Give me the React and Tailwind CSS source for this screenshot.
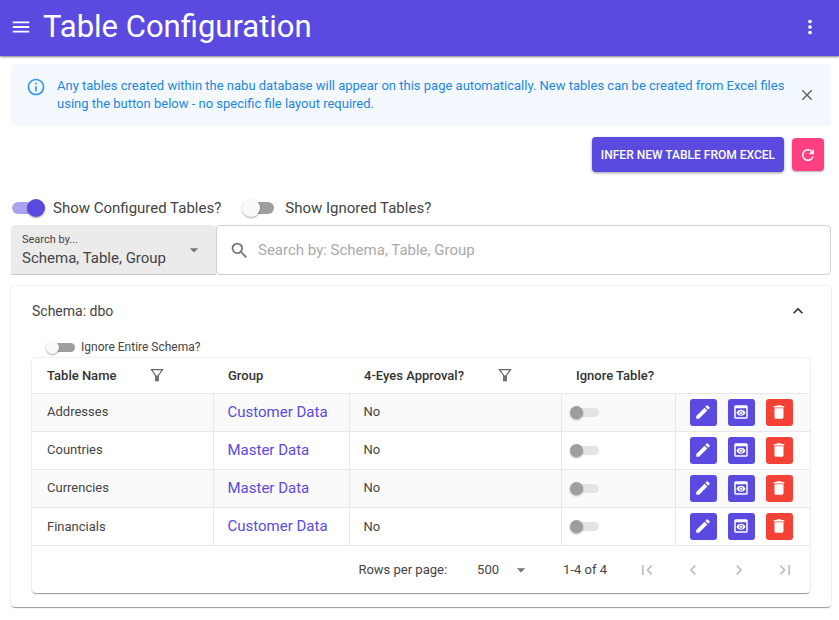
import { useState } from 'react';
import clsx from 'clsx';
import {
  MdMenu, MdMoreVert, MdInfoOutline, MdClose, MdRefresh, MdSearch, MdArrowDropDown, MdExpandLess,
  MdEdit, MdPreview, MdDelete, MdFirstPage, MdLastPage, MdChevronLeft, MdChevronRight,
} from 'react-icons/md';

const TABLES = [
  { name: 'Addresses', group: 'Customer Data', approval: 'No' },
  { name: 'Countries', group: 'Master Data', approval: 'No' },
  { name: 'Currencies', group: 'Master Data', approval: 'No' },
  { name: 'Financials', group: 'Customer Data', approval: 'No' },
];

const PAPER = 'rounded bg-white shadow-[0_2px_1px_-1px_rgba(0,0,0,0.25),0_1px_1px_rgba(0,0,0,0.14),0_0_2px_rgba(0,0,0,0.2)]';

function Switch({ small, ...props }) {
  return (
    <input
      type="checkbox"
      className={clsx(
        'relative shrink-0 appearance-none rounded-full bg-[#9e9ea1] cursor-pointer',
        'before:absolute before:rounded-full before:bg-[#fafafa] before:shadow-[0_1px_2px_rgba(0,0,0,0.35)]',
        'checked:bg-[#aca4f0] checked:before:bg-[#5a4ae0]',
        'disabled:bg-[#e3e4e3] disabled:before:bg-[#9e9e9e] disabled:cursor-default',
        small
          ? 'h-[9px] w-[27px] before:-left-0.5 before:-top-0.5 before:size-[13px] checked:before:left-4'
          : 'h-3 w-[30px] before:-left-0.5 before:-top-[3px] before:size-[18px] checked:before:left-[15px]'
      )}
      {...props}
    />
  );
}

function FilterIcon() {
  return (
    <svg viewBox="0 0 14 14" className="size-[14px] text-[#666]" fill="none" stroke="currentColor" strokeWidth="1.2">
      <path d="M1.4 1.65h11.2L8.3 7.4v5.2H5.7V7.4z" />
      <path d="M7 7.5v5" strokeWidth="1.8" />
    </svg>
  );
}

function IconButton({ label, className, children, ...props }) {
  return (
    <button aria-label={label} className={clsx('flex items-center justify-center shrink-0', className)} {...props}>
      {children}
    </button>
  );
}

function HeadCell({ children, filter, className }) {
  return (
    <th className={clsx('px-[15px] text-left font-medium', className)}>
      <div className="flex items-center justify-between">
        {children}
        {filter && (
          <IconButton label={`Filter ${children}`} className="mr-[34px]">
            <FilterIcon />
          </IconButton>
        )}
      </div>
    </th>
  );
}

function TableRow({ row }) {
  return (
    <tr className="h-[38px] border-t border-[#e8e8e8] odd:bg-[#fafafa]">
      <td className="px-[15px]">{row.name}</td>
      <td className="border-l border-[#e8e8e8] px-[14px]">
        <a href="#group" className="text-[15px] text-[#5a4ae0]">{row.group}</a>
      </td>
      <td className="border-l border-[#e8e8e8] px-[14px]">{row.approval}</td>
      <td className="border-l border-[#e8e8e8] px-[10px]">
        <div className="flex">
          <Switch small disabled aria-label={`Ignore ${row.name}`} />
        </div>
      </td>
      <td className="border-l border-[#e8e8e8] pl-[14px]">
        <div className="flex gap-[11px]">
          <IconButton label={`Edit ${row.name}`} className="size-[27px] rounded-[3px] bg-[#5a4ae0] text-white">
            <MdEdit size={18} />
          </IconButton>
          <IconButton label={`Preview ${row.name}`} className="size-[27px] rounded-[3px] bg-[#5a4ae0] text-white">
            <MdPreview size={18} />
          </IconButton>
          <IconButton label={`Delete ${row.name}`} className="size-[27px] rounded-[3px] bg-[#f44336] text-white">
            <MdDelete size={18} />
          </IconButton>
        </div>
      </td>
    </tr>
  );
}

function Pagination() {
  return (
    <div className="flex h-12 items-center justify-end border-t border-[#e8e8e8] pr-[15px] text-[13px]">
      <label htmlFor="rows">Rows per page:</label>
      <div className="relative ml-[30px] mr-8 flex items-center">
        <select id="rows" className="w-[54px] appearance-none bg-transparent outline-none">
          <option>500</option>
        </select>
        <MdArrowDropDown size={20} className="pointer-events-none absolute right-0 text-[#757575]" />
      </div>
      <span>1-4 of 4</span>
      <div className="ml-[30px] flex gap-[26px] text-[#bdbdbd]">
        <IconButton label="First page" disabled><MdFirstPage size={20} /></IconButton>
        <IconButton label="Previous page" disabled><MdChevronLeft size={20} /></IconButton>
        <IconButton label="Next page" disabled><MdChevronRight size={20} /></IconButton>
        <IconButton label="Last page" disabled><MdLastPage size={20} /></IconButton>
      </div>
    </div>
  );
}

function SchemaPanel() {
  const [open, setOpen] = useState(true);

  return (
    <section className={clsx('mt-[11px] px-[21px] pb-[14px]', PAPER)}>
      <button onClick={() => setOpen(o => !o)} className="flex h-[50px] w-full items-center justify-between">
        <span className="text-sm">Schema: dbo</span>
        <MdExpandLess size={20} className={clsx('mr-0.5 text-[#333]', !open && 'rotate-180')} />
      </button>

      {open && (
        <>
          <label className="ml-4 flex h-[22px] items-center gap-[6px] text-xs">
            <Switch small />
            Ignore Entire Schema?
          </label>
          <div className={PAPER}>
            <table className="w-full table-fixed border-collapse text-[13px]">
              <thead>
                <tr className="h-[35px] text-[#333]">
                  <HeadCell filter className="w-[181px]">Table Name</HeadCell>
                  <HeadCell className="w-[136px]">Group</HeadCell>
                  <HeadCell filter className="w-[212px]">4-Eyes Approval?</HeadCell>
                  <HeadCell className="w-[114px]">Ignore Table?</HeadCell>
                  <th aria-label="Actions" />
                </tr>
              </thead>
              <tbody>
                {TABLES.map(row => <TableRow key={row.name} row={row} />)}
              </tbody>
            </table>
            <Pagination />
          </div>
        </>
      )}
    </section>
  );
}

export default function App() {
  const [showInfo, setShowInfo] = useState(true);

  return (
    <div className="min-h-screen bg-white font-[Roboto,sans-serif] text-[#444]">
      {/* App bar */}
      <header className="flex h-14 items-center bg-[#5a4ae0] pb-0.5 pl-[10px] pr-[18px] text-white shadow-[0_1px_2px_rgba(0,0,0,0.5)]">
        <IconButton label="Menu"><MdMenu size={22} /></IconButton>
        <h1 className="ml-[11px] flex-1 text-[31px] leading-[54px]">Table Configuration</h1>
        <IconButton label="More"><MdMoreVert size={22} /></IconButton>
      </header>

      <main className="pb-3 pl-[11px] pr-2 pt-2">
        {showInfo && (
          <div role="alert" className="flex rounded bg-[#f4f9ff] px-[15px] py-[13px] text-[13px] leading-[18px] text-[#1c86e0]">
            <MdInfoOutline size={20} className="shrink-0 text-[#2f96f3]" />
            <p className="ml-[11px] flex-1">
              Any tables created within the nabu database will appear on this page automatically. New tables can be
              created from Excel files using the button below - no specific file layout required.
            </p>
            <IconButton label="Close" onClick={() => setShowInfo(false)} className="text-[#666]">
              <MdClose size={18} />
            </IconButton>
          </div>
        )}

        <div className="mt-[11px] flex items-center justify-end gap-2 pr-[7px]">
          <button className="h-[35px] rounded bg-[#5a4ae0] px-[9px] text-xs font-medium uppercase text-white shadow-[0_1px_3px_rgba(0,0,0,0.4)]">
            Infer new table from Excel
          </button>
          <IconButton label="Refresh" className="h-[33px] w-8 rounded bg-[#ff4081] text-white shadow-[0_1px_2px_rgba(0,0,0,0.3)]">
            <MdRefresh size={18} />
          </IconButton>
        </div>

        <div className="mt-[25px] flex h-[22px] items-center gap-[23px] pl-[1px] text-[15px]">
          <label className="flex items-center gap-[11px]">
            <Switch defaultChecked />
            Show Configured Tables?
          </label>
          <label className="flex items-center gap-[11px]">
            <Switch />
            Show Ignored Tables?
          </label>
        </div>

        <div className="mt-[6px] flex h-[50px]">
          <div className="relative flex w-[205px] shrink-0 flex-col justify-center rounded-t border-b border-[#c8c8c8] bg-[#ebebeb]">
            <label htmlFor="search-by" className="px-[11px] text-[11px] leading-4">Search by...</label>
            <select id="search-by" className="w-full appearance-none bg-transparent px-[11px] text-[15px] leading-5 outline-none">
              <option>Schema, Table, Group</option>
            </select>
            <MdArrowDropDown size={20} className="pointer-events-none absolute right-3 text-[#757575]" />
          </div>
          <div className="flex flex-1 items-center rounded border border-[#d0d0d0] pl-3">
            <MdSearch size={21} className="shrink-0 text-[#757575]" />
            <input
              type="text"
              aria-label="Search"
              placeholder="Search by: Schema, Table, Group"
              className="ml-2 flex-1 bg-transparent text-[15px] outline-none placeholder:text-[#aaa]"
            />
          </div>
        </div>

        <SchemaPanel />
      </main>
    </div>
  );
}
